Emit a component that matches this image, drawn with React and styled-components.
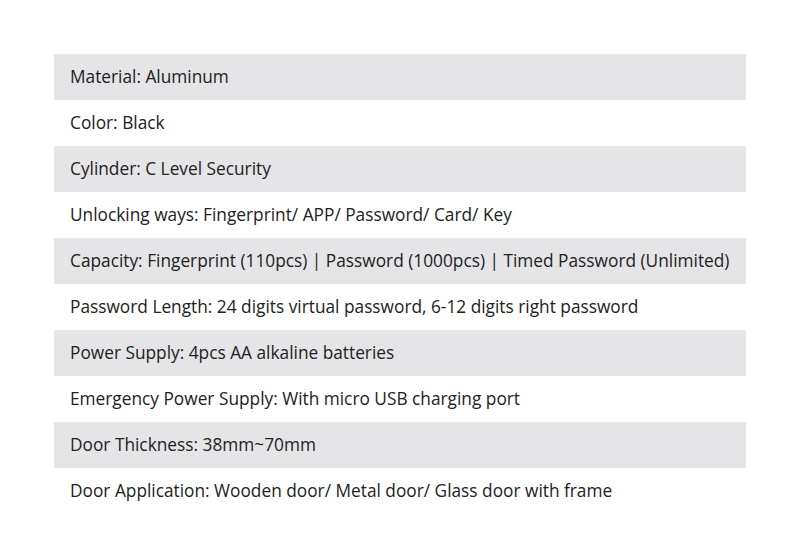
import React from "react";
import styled, { createGlobalStyle } from "styled-components";

const GlobalStyle = createGlobalStyle`
  body {
    margin: 0;
    background: #ffffff;
    font-family: "Open Sans", "Noto Sans", sans-serif;
  }
`;

const Page = styled.div`
  width: 800px;
  height: 555px;
  padding: 54px 54px 0;
  box-sizing: border-box;
`;

const SpecTable = styled.div`
  display: flex;
  flex-direction: column;
  width: 692px;
`;

const SpecRow = styled.div`
  height: 46px;
  display: flex;
  align-items: center;
  padding: 0 0 2px 16px;
  box-sizing: border-box;
  background: ${(p) => (p.shaded ? "#e5e5e7" : "#ffffff")};
  color: #222222;
  font-size: 17.3px;
  white-space: nowrap;
`;

const specs = [
  "Material: Aluminum",
  "Color: Black",
  "Cylinder: C Level Security",
  "Unlocking ways: Fingerprint/ APP/ Password/ Card/ Key",
  "Capacity: Fingerprint (110pcs) | Password (1000pcs) | Timed Password (Unlimited)",
  "Password Length: 24 digits virtual password, 6-12 digits right password",
  "Power Supply: 4pcs AA alkaline batteries",
  "Emergency Power Supply: With micro USB charging port",
  "Door Thickness: 38mm~70mm",
  "Door Application: Wooden door/ Metal door/ Glass door with frame",
];

const App = () => {
  return (
    <Page>
      <GlobalStyle />
      <SpecTable>
        {specs.map((text, index) => (
          <SpecRow key={index} shaded={index % 2 === 0}>
            {text}
          </SpecRow>
        ))}
      </SpecTable>
    </Page>
  );
};

export default App;
